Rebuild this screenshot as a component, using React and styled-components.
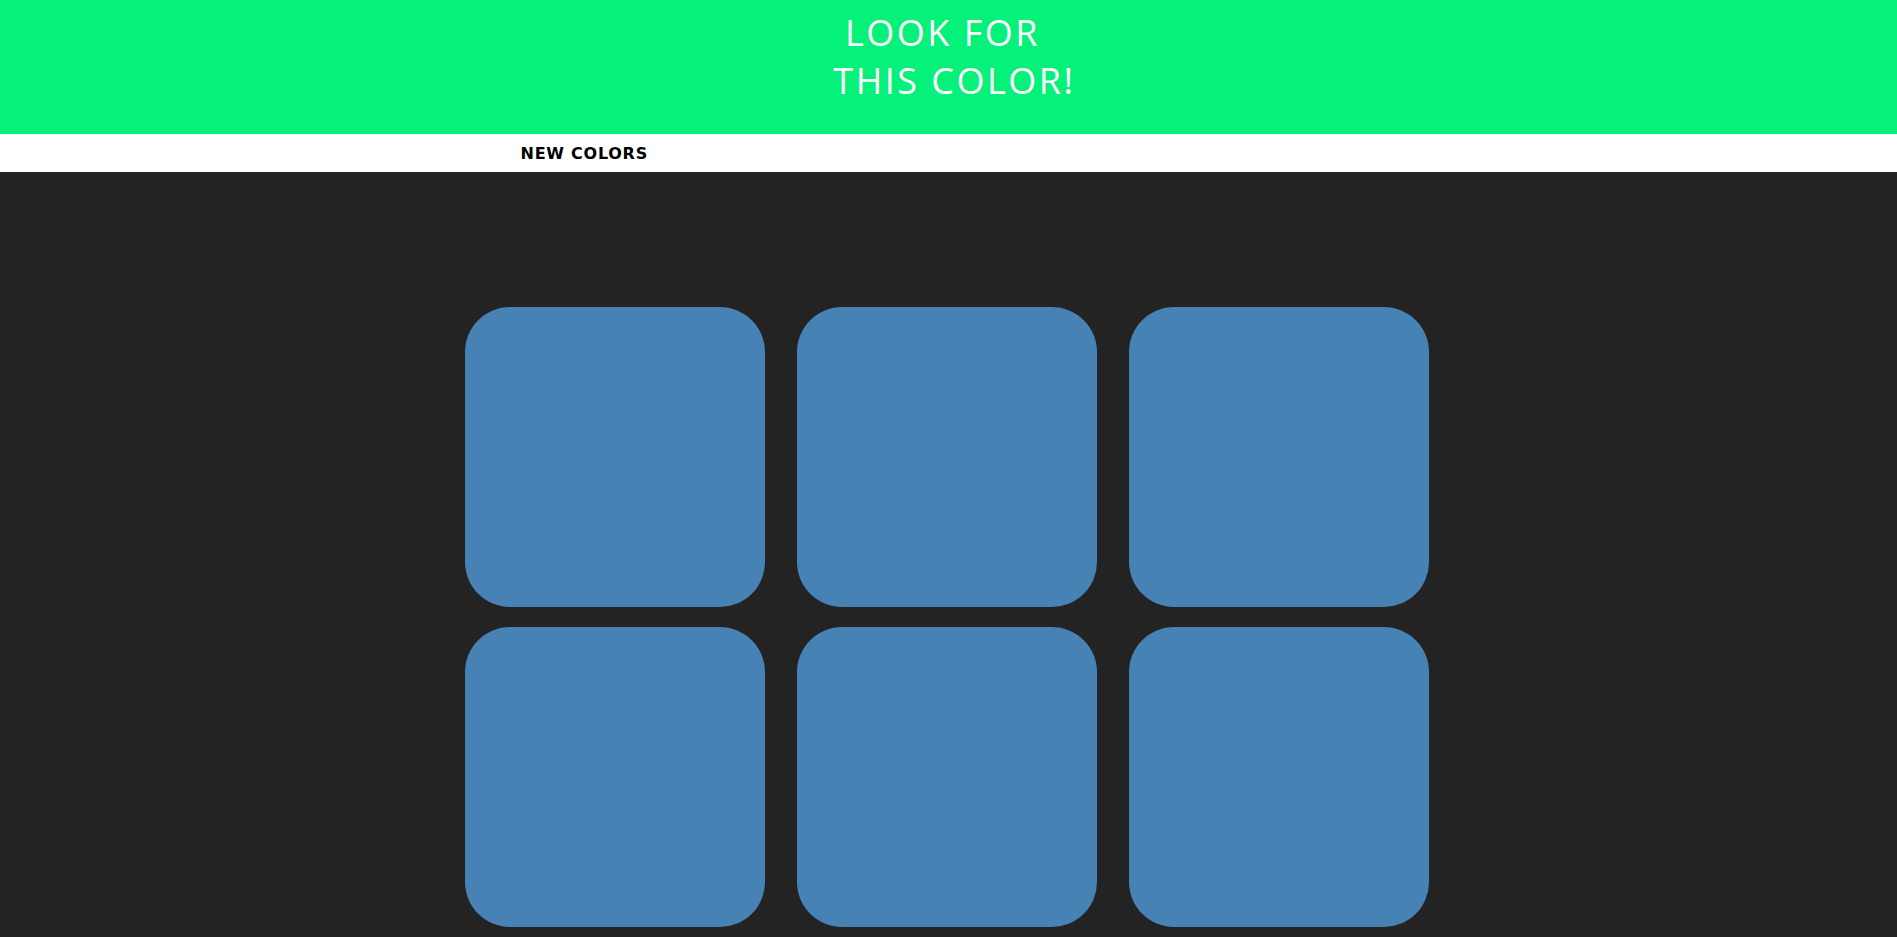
import React from 'react';
import styled, { createGlobalStyle } from 'styled-components';

const GlobalStyle = createGlobalStyle`
  html, body {
    margin: 0;
    padding: 0;
    background: #232323;
    overflow: hidden;
  }
  body {
    font-family: "Open Sans", "Liberation Sans", sans-serif;
  }
`;

const Header = styled.h1`
  margin: 0;
  padding: 9px 0 29px;
  background: ${props => props.target};
  color: #ffffff;
  text-align: center;
  font-family: "Open Sans", "Liberation Sans", sans-serif;
  font-weight: 400;
  font-size: 36px;
  line-height: 48px;
  letter-spacing: 2.5px;
  text-transform: uppercase;
`;

const Line = styled.span`
  display: block;
  white-space: pre;
`;

const Stripe = styled.div`
  background: #ffffff;
  height: 38px;
`;

const StripeInner = styled.div`
  width: 1000px;
  height: 100%;
  margin: 0 auto;
  padding-left: 72px;
  box-sizing: border-box;
  display: flex;
  align-items: center;
`;

const Button = styled.button`
  border: none;
  background: none;
  padding: 0;
  height: 100%;
  color: #000000;
  font-family: "DejaVu Sans", Verdana, sans-serif;
  font-weight: 700;
  font-size: 16px;
  letter-spacing: 0.75px;
  text-transform: uppercase;
  cursor: pointer;
  outline: none;
`;

const Board = styled.div`
  width: 1000px;
  margin: 0 auto;
  padding: 135px 16.5px 0;
  box-sizing: border-box;
  display: grid;
  grid-template-columns: repeat(3, 300px);
  column-gap: 32px;
  row-gap: 20px;
`;

const Square = styled.div`
  width: 300px;
  height: 300px;
  border-radius: 45px;
  background: ${props => props.color};
`;

const target = '#06f17a';
const colors = Array(6).fill('#4682b4');

export default function App() {
  return (
    <>
      <GlobalStyle />
      <Header target={target}>
        <Line>{'LOOK FOR\u00a0'}</Line>
        <Line>{'\u00a0THIS COLOR!'}</Line>
      </Header>
      <Stripe>
        <StripeInner>
          <Button>New Colors</Button>
        </StripeInner>
      </Stripe>
      <Board>
        {colors.map((c, i) => (
          <Square key={i} color={c} />
        ))}
      </Board>
    </>
  );
}
